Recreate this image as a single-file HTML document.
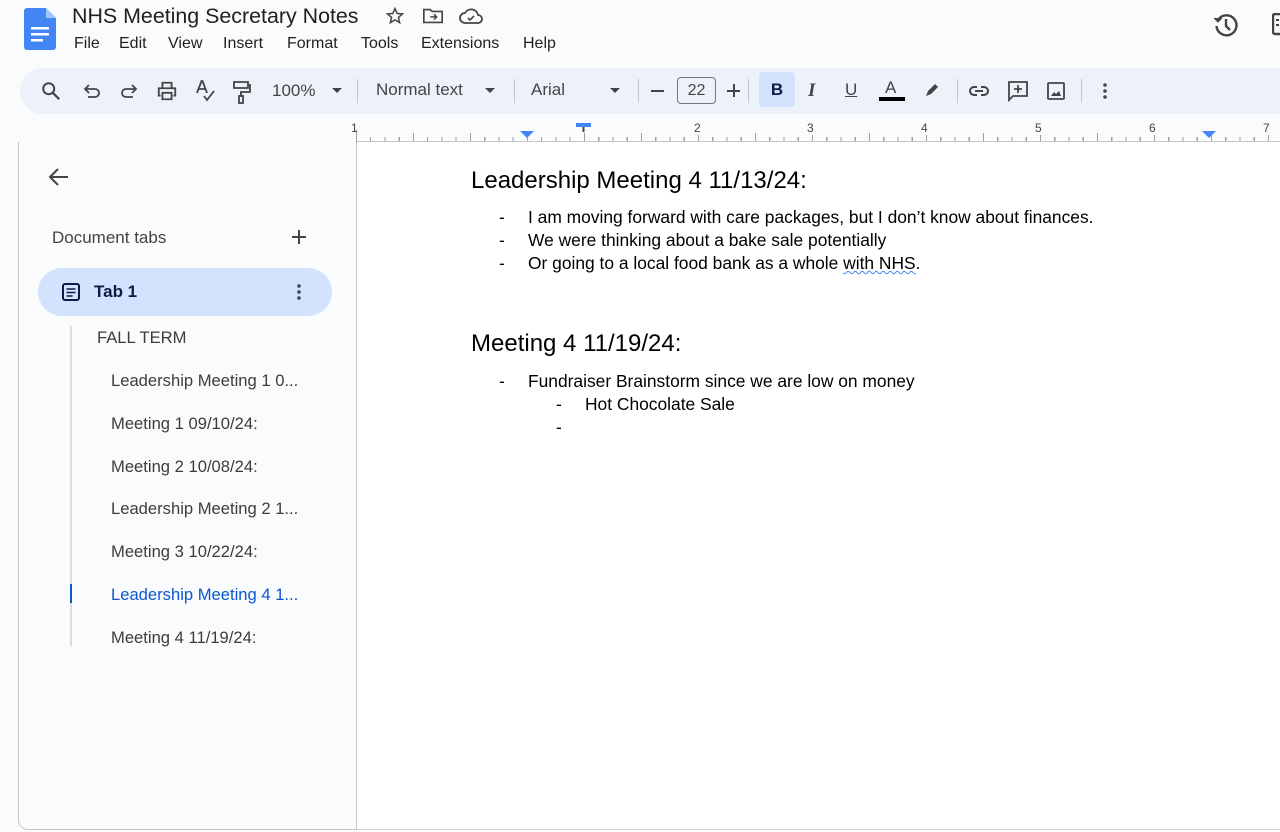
<!DOCTYPE html>
<html><head><meta charset="utf-8">
<style>
*{margin:0;padding:0;box-sizing:border-box}
body{width:1280px;height:832px;overflow:hidden;background:#f9fbfd;font-family:"Liberation Sans",Arial,sans-serif;position:relative;color:#1f1f1f}
.a{position:absolute;white-space:nowrap}
.menu span{position:absolute;top:35px;font-size:16px;color:#1f1f1f}
.tb{position:absolute;left:20px;top:68px;width:1300px;height:46px;background:#edf2fa;border-radius:23px}
.div{position:absolute;top:79px;width:1px;height:24px;background:#c7c7c7}
.tt{position:absolute;top:81px;font-size:17px;color:#444}
.side{position:absolute;left:18px;top:142px;width:339px;height:688px;border-left:1px solid #c4c7c5;border-right:1px solid #c4c7c5;border-bottom:1px solid #c4c7c5;border-bottom-left-radius:10px;background:#f9fbfd}
.doc{position:absolute;left:357px;top:142px;width:923px;height:688px;background:#fff;border-bottom:1px solid #d0d0d0}
.si{position:absolute;left:111px;font-size:16.6px;color:#3c3c3c}
.p{position:absolute;font-size:17.4px;color:#000}
svg{position:absolute}
</style></head><body>
<svg style="left:24px;top:8px" width="32" height="42" viewBox="0 0 32 42"><path d="M3 0h19l10 10v29a3 3 0 0 1-3 3H3a3 3 0 0 1-3-3V3a3 3 0 0 1 3-3z" fill="#4285f4"/><path d="M22 0l10 10h-10z" fill="#a1c2fa"/><rect x="7" y="19" width="18" height="2.5" fill="#fff"/><rect x="7" y="25" width="18" height="2.5" fill="#fff"/><rect x="7" y="31" width="12" height="2.5" fill="#fff"/></svg>
<div class="a" style="left:72px;top:4px;font-size:21.4px;color:#1f1f1f">NHS Meeting Secretary Notes</div>
<svg style="left:385px;top:6px" width="20" height="20" viewBox="0 0 24 24"><path d="M12 3l2.6 6 6.4.5-4.9 4.2 1.5 6.3L12 16.6 6.4 20l1.5-6.3L3 9.5 9.4 9z" fill="none" stroke="#444" stroke-width="1.8"/></svg>
<svg style="left:422px;top:6px" width="22" height="20" viewBox="0 0 24 20"><path d="M2 3h7l2 2h11v12H2z" fill="none" stroke="#444" stroke-width="1.8"/><path d="M9 11h7M13 8l3 3-3 3" fill="none" stroke="#444" stroke-width="1.6"/></svg>
<svg style="left:459px;top:7px" width="24" height="18" viewBox="0 0 24 18"><path d="M6 16a5 5 0 0 1 0-10 7 7 0 0 1 13 2 4 4 0 0 1 0 8z" fill="none" stroke="#444" stroke-width="1.8"/><path d="M9 11l2 2 4-4" fill="none" stroke="#444" stroke-width="1.6"/></svg>
<div class="menu"><span style="left:74px">File</span><span style="left:119px">Edit</span><span style="left:168px">View</span><span style="left:223px">Insert</span><span style="left:287px">Format</span><span style="left:361px">Tools</span><span style="left:421px">Extensions</span><span style="left:523px">Help</span></div>
<svg style="left:1212px;top:11px" width="28" height="28" viewBox="0 0 28 28"><path d="M6 9a10 10 0 1 1-1.5 6" fill="none" stroke="#444" stroke-width="2.4"/><path d="M2 7l4 4 4-4" fill="#444" stroke="#444" stroke-width="1"/><path d="M14 8v7l4 4" fill="none" stroke="#444" stroke-width="2.4"/></svg>
<svg style="left:1272px;top:13px" width="10" height="24" viewBox="0 0 10 24"><rect x="1" y="1" width="14" height="20" rx="2" fill="none" stroke="#444" stroke-width="2.4"/><rect x="4" y="6" width="3" height="2" fill="#444"/><rect x="4" y="11" width="3" height="2" fill="#444"/></svg>

<div class="tb"></div>
<svg style="left:40px;top:80px" width="22" height="22" viewBox="0 0 24 24"><circle cx="9.5" cy="9.5" r="6" fill="none" stroke="#444" stroke-width="2.2"/><path d="M14 14l7 7" stroke="#444" stroke-width="2.4"/></svg>
<svg style="left:82px;top:82px" width="20" height="20" viewBox="0 0 20 20"><path d="M4 7h9a4 4 0 0 1 0 8H6" fill="none" stroke="#444" stroke-width="1.8"/><path d="M7 3L3 7l4 4" fill="none" stroke="#444" stroke-width="1.8"/></svg>
<svg style="left:119px;top:82px" width="20" height="20" viewBox="0 0 20 20"><path d="M16 7H7a4 4 0 0 0 0 8h7" fill="none" stroke="#444" stroke-width="1.8"/><path d="M13 3l4 4-4 4" fill="none" stroke="#444" stroke-width="1.8"/></svg>
<svg style="left:156px;top:80px" width="22" height="22" viewBox="0 0 24 24"><path d="M7 8V3h10v5M5 17H3V9h18v8h-2M7 14h10v7H7z" fill="none" stroke="#444" stroke-width="2"/></svg>
<svg style="left:195px;top:79px" width="22" height="24" viewBox="0 0 22 24"><path d="M2 14L6.5 2h1L12 14M4 10h6" fill="none" stroke="#444" stroke-width="1.8"/><path d="M9 17l3 4 7-9" fill="none" stroke="#444" stroke-width="1.8"/></svg>
<svg style="left:232px;top:80px" width="20" height="24" viewBox="0 0 20 24"><path d="M2 2h14v6H2zM16 5h2v7H9v4" fill="none" stroke="#444" stroke-width="1.8"/><rect x="7" y="16" width="4" height="7" fill="none" stroke="#444" stroke-width="1.8"/></svg>
<div class="tt" style="left:272px">100%</div>
<svg style="left:331px;top:87px" width="12" height="8"><path d="M1 1h10L6 6z" fill="#444"/></svg>
<div class="div" style="left:357px"></div>
<div class="tt" style="left:376px;top:80px">Normal text</div>
<svg style="left:484px;top:87px" width="12" height="8"><path d="M1 1h10L6 6z" fill="#444"/></svg>
<div class="div" style="left:514px"></div>
<div class="tt" style="left:531px;top:80px">Arial</div>
<svg style="left:609px;top:87px" width="12" height="8"><path d="M1 1h10L6 6z" fill="#444"/></svg>
<div class="div" style="left:638px"></div>
<div class="a" style="left:651px;top:90px;width:13px;height:2px;background:#444"></div>
<div class="a" style="left:677px;top:77px;width:39px;height:27px;border:1px solid #747775;border-radius:4px;font-size:16px;color:#444;text-align:center;line-height:25px">22</div>
<div class="a" style="left:727px;top:90px;width:13px;height:2px;background:#444"></div>
<div class="a" style="left:733px;top:84px;width:2px;height:13px;background:#444"></div>
<div class="div" style="left:748px"></div>
<div class="a" style="left:759px;top:72px;width:36px;height:35px;background:#d3e3fd;border-radius:4px;text-align:center;font-weight:bold;font-size:17px;line-height:36px;color:#0b1d46">B</div>
<div class="a" style="left:808px;top:80px;font-size:19px;font-style:italic;font-family:'Liberation Serif',serif;color:#444;font-weight:bold">I</div>
<div class="a" style="left:845px;top:80px;font-size:17px;color:#444;text-decoration:underline">U</div>
<div class="a" style="left:885px;top:78px;font-size:17px;color:#444">A</div>
<div class="a" style="left:879px;top:97px;width:26px;height:4px;background:#000"></div>
<svg style="left:922px;top:80px" width="20" height="20" viewBox="0 0 20 20"><path d="M4 16l2-5 7-7 3 3-7 7z" fill="#444"/></svg>
<div class="div" style="left:957px"></div>
<svg style="left:968px;top:82px" width="22" height="18" viewBox="0 0 22 18"><path d="M9 5H6a4 4 0 0 0 0 8h3M13 5h3a4 4 0 0 1 0 8h-3M7 9h8" fill="none" stroke="#444" stroke-width="2"/></svg>
<svg style="left:1007px;top:80px" width="22" height="22" viewBox="0 0 22 22"><path d="M2 2h18v14H6l-4 4z" fill="none" stroke="#444" stroke-width="1.8"/><path d="M11 5v8M7 9h8" stroke="#444" stroke-width="1.8"/></svg>
<svg style="left:1046px;top:81px" width="20" height="20" viewBox="0 0 20 20"><rect x="2" y="2" width="16" height="16" rx="1" fill="none" stroke="#444" stroke-width="1.8"/><path d="M5 15l3-4 2 2 3-3 2 5z" fill="#444"/></svg>
<div class="div" style="left:1081px"></div>
<svg style="left:1101px;top:82px" width="8" height="18"><circle cx="4" cy="3" r="1.8" fill="#444"/><circle cx="4" cy="9" r="1.8" fill="#444"/><circle cx="4" cy="15" r="1.8" fill="#444"/></svg>

<div class="a" style="left:356px;top:141px;width:924px;height:1px;background:#c4c7c5"></div>
<div class="a" style="left:356px;top:137px;width:924px;height:4px;background:repeating-linear-gradient(90deg,#9aa0a6 0 1px,transparent 1px 14.25px)"></div>
<div class="a" style="left:356px;top:133px;width:924px;height:8px;background:repeating-linear-gradient(90deg,#9aa0a6 0 1px,transparent 1px 57px)"></div>
<div class="a" style="left:356px;top:130px;width:1px;height:22px;background:#9aa0a6"></div>
<div class="a" style="left:351px;top:121px;font-size:12px;color:#444">1</div>
<div class="a" style="left:693px;top:121px;font-size:12px;color:#444;background:#f9fbfd;padding:0 1px">2</div>
<div class="a" style="left:806px;top:121px;font-size:12px;color:#444;background:#f9fbfd;padding:0 1px">3</div>
<div class="a" style="left:920px;top:121px;font-size:12px;color:#444;background:#f9fbfd;padding:0 1px">4</div>
<div class="a" style="left:1034px;top:121px;font-size:12px;color:#444;background:#f9fbfd;padding:0 1px">5</div>
<div class="a" style="left:1148px;top:121px;font-size:12px;color:#444;background:#f9fbfd;padding:0 1px">6</div>
<div class="a" style="left:1262px;top:121px;font-size:12px;color:#444;background:#f9fbfd;padding:0 1px">7</div>
<svg style="left:520px;top:131px" width="14" height="8"><path d="M0 0h14L7 7z" fill="#4285f4"/></svg>
<svg style="left:576px;top:123px" width="15" height="10"><rect x="0" y="0" width="15" height="4" fill="#4285f4"/><rect x="6.5" y="4" width="2" height="5" fill="#444"/></svg>
<svg style="left:1202px;top:131px" width="14" height="8"><path d="M0 0h14L7 7z" fill="#4285f4"/></svg>

<div class="side"></div>
<div class="doc"></div>
<svg style="left:48px;top:166px" width="22" height="22" viewBox="0 0 22 22"><path d="M20 11H3M10 3l-8 8 8 8" fill="none" stroke="#444" stroke-width="2"/></svg>
<div class="a" style="left:52px;top:228px;font-size:17px;color:#444">Document tabs</div>
<div class="a" style="left:292px;top:236px;width:14px;height:2px;background:#444"></div>
<div class="a" style="left:298px;top:230px;width:2px;height:14px;background:#444"></div>
<div class="a" style="left:38px;top:268px;width:294px;height:48px;background:#d3e3fd;border-radius:24px"></div>
<svg style="left:62px;top:283px" width="18" height="18" viewBox="0 0 18 18"><rect x="1" y="1" width="16" height="16" rx="2" fill="none" stroke="#0b1d46" stroke-width="2"/><path d="M4.5 6h9M4.5 9.5h9M4.5 13h6" stroke="#0b1d46" stroke-width="1.6"/></svg>
<div class="a" style="left:94px;top:282px;font-size:17px;color:#0b1d46;font-weight:bold">Tab 1</div>
<svg style="left:295px;top:283px" width="8" height="18"><circle cx="4" cy="3" r="1.8" fill="#444"/><circle cx="4" cy="9" r="1.8" fill="#444"/><circle cx="4" cy="15" r="1.8" fill="#444"/></svg>
<div class="a" style="left:70px;top:326px;width:2px;height:320px;background:#dadce0"></div>
<div class="a" style="left:70px;top:584px;width:2px;height:19px;background:#0b57d0"></div>
<div class="si" style="left:97px;top:328px">FALL TERM</div>
<div class="si" style="top:371px">Leadership Meeting 1 0...</div>
<div class="si" style="top:414px">Meeting 1 09/10/24:</div>
<div class="si" style="top:457px">Meeting 2 10/08/24:</div>
<div class="si" style="top:499px">Leadership Meeting 2 1...</div>
<div class="si" style="top:542px">Meeting 3 10/22/24:</div>
<div class="si" style="top:585px;color:#0b57d0">Leadership Meeting 4 1...</div>
<div class="si" style="top:628px">Meeting 4 11/19/24:</div>

<div class="p" style="left:471px;top:167px;font-size:24px">Leadership Meeting 4 11/13/24:</div>
<div class="p" style="left:499px;top:207px">-</div><div class="p" style="left:528px;top:207px">I am moving forward with care packages, but I don’t know about finances.</div>
<div class="p" style="left:499px;top:230px">-</div><div class="p" style="left:528px;top:230px">We were thinking about a bake sale potentially</div>
<div class="p" style="left:499px;top:253px">-</div><div class="p" style="left:528px;top:253px">Or going to a local food bank as a whole <span style="text-decoration:underline wavy #4285f4;text-decoration-thickness:1px">with NHS</span>.</div>
<div class="p" style="left:471px;top:330px;font-size:24px">Meeting 4 11/19/24:</div>
<div class="p" style="left:499px;top:371px">-</div><div class="p" style="left:528px;top:371px">Fundraiser Brainstorm since we are low on money</div>
<div class="p" style="left:556px;top:394px">-</div><div class="p" style="left:585px;top:394px">Hot Chocolate Sale</div>
<div class="p" style="left:556px;top:417px">-</div>
</body></html>
